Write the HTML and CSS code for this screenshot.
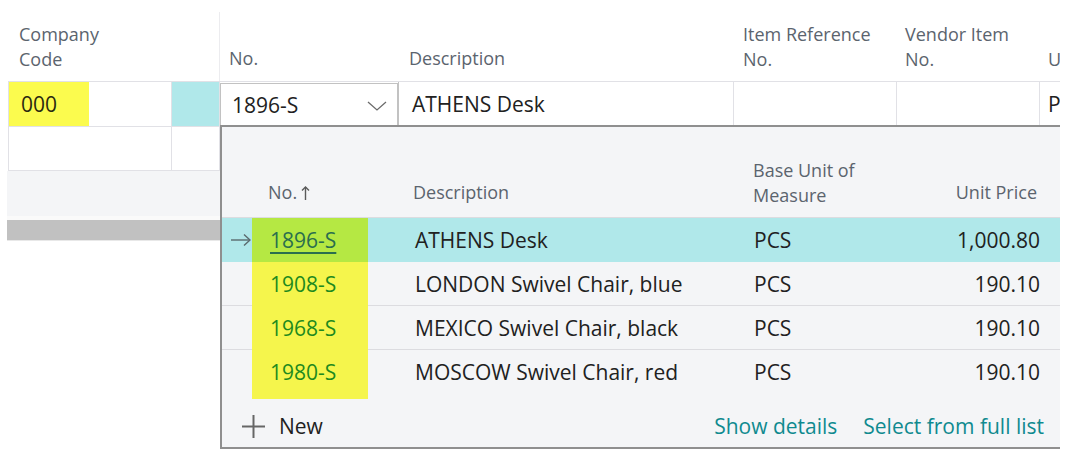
FILE: index.html
```html
<!DOCTYPE html>
<html>
<head>
<meta charset="utf-8">
<link rel="stylesheet" href="styles.css">
</head>
<body>
<div class="page">
  <div class="grid-head">
    <div class="hcell h-company">Company<br>Code</div>
    <div class="hcell h-no">No.</div>
    <div class="hcell h-desc">Description</div>
    <div class="hcell h-ref">Item Reference<br>No.</div>
    <div class="hcell h-vendor">Vendor Item<br>No.</div>
    <div class="hcell h-u">U</div>
  </div>
  <div class="row row1">
    <div class="cell c1"><span class="hl">000</span></div>
    <div class="cell c2 sel"></div>
    <div class="cell c3">
      <div class="input">
        <span>1896-S</span>
        <svg class="chev" width="20" height="10" viewBox="0 0 20 10"><polyline points="1,1 10,9 19,1" fill="none" stroke="#6b6b6b" stroke-width="1.3"/></svg>
      </div>
    </div>
    <div class="cell c4">ATHENS Desk</div>
    <div class="cell c5"></div>
    <div class="cell c6"></div>
    <div class="cell c7">P</div>
  </div>
  <div class="row row2">
    <div class="cell c1"></div>
    <div class="cell c2"></div>
    <div class="cell c3"></div>
    <div class="cell c4"></div>
    <div class="cell c5"></div>
    <div class="cell c6"></div>
    <div class="cell c7"></div>
  </div>
  <div class="grid-foot"></div>
  <div class="gap"></div>
  <div class="scrollbar"></div>

  <div class="dropdown">
    <div class="dd-head">
      <div class="dh dh-arrow"></div>
      <div class="dh dh-no single">No.<svg class="up" width="9" height="14" viewBox="0 0 9 14"><line x1="4.5" y1="1" x2="4.5" y2="14" stroke="#5a5a5a" stroke-width="1.4"/><polyline points="1,4.5 4.5,1 8,4.5" fill="none" stroke="#5a5a5a" stroke-width="1.4"/></svg></div>
      <div class="dh dh-desc single">Description</div>
      <div class="dh dh-uom">Base Unit of<br>Measure</div>
      <div class="dh dh-price single">Unit Price</div>
      <div class="dh"></div>
    </div>
    <div class="dd-row current">
      <div class="dc arrow"><svg width="20" height="12" viewBox="0 0 20 12"><line x1="0" y1="6" x2="19" y2="6" stroke="#5a6a6e" stroke-width="1.4"/><polyline points="13,0.5 19,6 13,11.5" fill="none" stroke="#5a6a6e" stroke-width="1.4"/></svg></div>
      <div class="dc no"><span class="link">1896-S</span></div>
      <div class="dc desc">ATHENS Desk</div>
      <div class="dc uom">PCS</div>
      <div class="dc price">1,000.80</div>
      <div class="dc"></div>
    </div>
    <div class="dd-row">
      <div class="dc arrow"></div>
      <div class="dc no">1908-S</div>
      <div class="dc desc">LONDON Swivel Chair, blue</div>
      <div class="dc uom">PCS</div>
      <div class="dc price">190.10</div>
      <div class="dc"></div>
    </div>
    <div class="dd-row">
      <div class="dc arrow"></div>
      <div class="dc no">1968-S</div>
      <div class="dc desc">MEXICO Swivel Chair, black</div>
      <div class="dc uom">PCS</div>
      <div class="dc price">190.10</div>
      <div class="dc"></div>
    </div>
    <div class="dd-row last">
      <div class="dc arrow"></div>
      <div class="dc no"><span class="lastno">1980-S</span></div>
      <div class="dc desc">MOSCOW Swivel Chair, red</div>
      <div class="dc uom">PCS</div>
      <div class="dc price">190.10</div>
      <div class="dc"></div>
    </div>
    <div class="dd-foot">
      <div class="new">
        <svg width="23" height="23" viewBox="0 0 23 23"><line x1="11.5" y1="0" x2="11.5" y2="23" stroke="#666" stroke-width="2"/><line x1="0" y1="11.5" x2="23" y2="11.5" stroke="#666" stroke-width="2"/></svg>
        <span>New</span>
      </div>
      <div class="links">
        <span class="tlink">Show details</span>
        <span class="tlink">Select from full list</span>
      </div>
    </div>
  </div>
</div>
</body>
</html>
```

FILE: styles.css
```css
* { box-sizing: border-box; }
html, body { margin: 0; padding: 0; background: #fff; }
body {
  font-family: "Open Sans", "Noto Sans", "Liberation Sans", sans-serif;
  color: #212121;
  width: 1072px;
  height: 467px;
  overflow: hidden;
}
.page {
  position: relative;
  width: 1060px;
  height: 467px;
  padding-left: 8px;
  overflow: hidden;
}
.grid-head, .row {
  display: grid;
  grid-template-columns: 164px 48px 178px 335px 163px 143px 21px;
}
.grid-head {
  height: 81px;
  align-items: end;
  font-size: 18px;
  line-height: 25px;
  color: #5b646e;
}
.hcell { padding-bottom: 9px; white-space: nowrap; }
.h-company {
  grid-column: 1 / span 2;
  padding-left: 11px;
  height: 69px;
  display: flex;
  align-items: flex-end;
  border-right: 1px solid #ececef;
}
.h-no { padding-left: 9px; padding-bottom: 10px; }
.h-desc { padding-left: 11px; padding-bottom: 10px; }
.h-ref { padding-left: 10px; }
.h-vendor { padding-left: 9px; }
.h-u { padding-left: 9px; overflow: hidden; }

.row { font-size: 21px; line-height: 28px; }
.row1 { height: 45px; border-top: 1px solid #e1e1e6; }
.row2 { height: 45px; border-top: 1px solid #e1e1e6; border-bottom: 1px solid #e1e1e6; }
.cell { display: flex; align-items: center; background: #fff; }
.c1 { border-left: 1px solid #e1e1e6; border-right: 1px solid #e1e1e6; }
.c2 { border-right: 1px solid #e1e1e6; }
.c2.sel { background: #b0e8ea; }
.c3 { align-items: stretch; padding-top: 1px; }
.hl {
  display: flex;
  align-items: center;
  height: 100%;
  width: 80px;
  padding-left: 12px;
  background: #fbfb4e;
  color: #2a2a10;
}
.input {
  flex: 1;
  display: flex;
  align-items: center;
  justify-content: space-between;
  border: 1px solid #c2c2c2;
  padding: 0 10px 0 11px;
  background: #fff;
}
.chev { display: block; margin-top: 2px; }
.c4 { padding-left: 13px; border-left: 1px solid #c2c2c2; }
.c5 { border-left: 1px solid #e1e1e6; }
.c6 { border-left: 1px solid #e1e1e6; }
.c7 { border-left: 1px solid #e1e1e6; padding-left: 8px; overflow: hidden; }

.grid-foot { height: 45px; margin-left: -1px; background: #f4f5f7; }
.gap { height: 4px; background: #fafafa; margin-left: -1px; }
.scrollbar { height: 21px; background: #c1c1c1; margin-left: -1px; border-bottom: 1px solid #e8e8e8; }

.dropdown {
  position: absolute;
  left: 220px;
  top: 125px;
  width: 844px;
  height: 324px;
  background: #f4f5f7;
  border: 2px solid #8f8f8f;
  border-right: none;
  display: flex;
  flex-direction: column;
}
.dd-head, .dd-row {
  display: grid;
  grid-template-columns: 30px 116px 372px 150px 150px 1fr;
}
.dd-head {
  height: 91px;
  flex: none;
  align-items: end;
  border-bottom: 1px solid #dcdce0;
  font-size: 18px;
  line-height: 25px;
  color: #5b646e;
}
.dh { padding-bottom: 9px; white-space: nowrap; }
.dh.single { padding-bottom: 12px; }
.dh-no { padding-left: 16px; display: flex; align-items: center; gap: 4px; }
.dh-no .up { display: block; margin-top: 1px; }
.dh-desc { padding-left: 45px; }
.dh-uom { padding-left: 13px; }
.dh-price { text-align: right; padding-right: 3px; }

.dd-row { height: 44px; flex: none; font-size: 21px; line-height: 28px; }
.dc {
  display: flex;
  align-items: center;
  border-bottom: 1px solid #dcdce0;
  white-space: nowrap;
}
.dd-row.current .dc { border-bottom-color: #b0e8ea; background: #b0e8ea; }
.dd-row.last { height: 49px; }
.dd-row.last .dc { border-bottom: none; padding-bottom: 5px; }
.dd-row.last .dc.no { padding-bottom: 5px; }
.dc.arrow { padding-left: 9px; }
.dc.no {
  padding-left: 18px;
  background: #f5f54c;
  border-bottom-color: #f5f54c;
  color: #1e8a1e;
}
.dd-row.current .dc.no { background: #b5e843; border-bottom-color: #b5e843; }
.link { color: #2a6e4e; text-decoration: underline; text-underline-offset: 4px; text-decoration-thickness: 1.5px; }
.dc.desc { padding-left: 47px; }
.dc.uom { padding-left: 14px; }
.dc.price { justify-content: flex-end; }

.dd-foot {
  flex: 1;
  display: flex;
  align-items: center;
  justify-content: space-between;
  padding: 8px 20px 2px 20px;
  font-size: 21px;
  line-height: 28px;
}
.new { display: flex; align-items: center; gap: 14px; }
.new svg { display: block; }
.links { display: flex; gap: 26px; }
.tlink { color: #0f8a8f; }
```
